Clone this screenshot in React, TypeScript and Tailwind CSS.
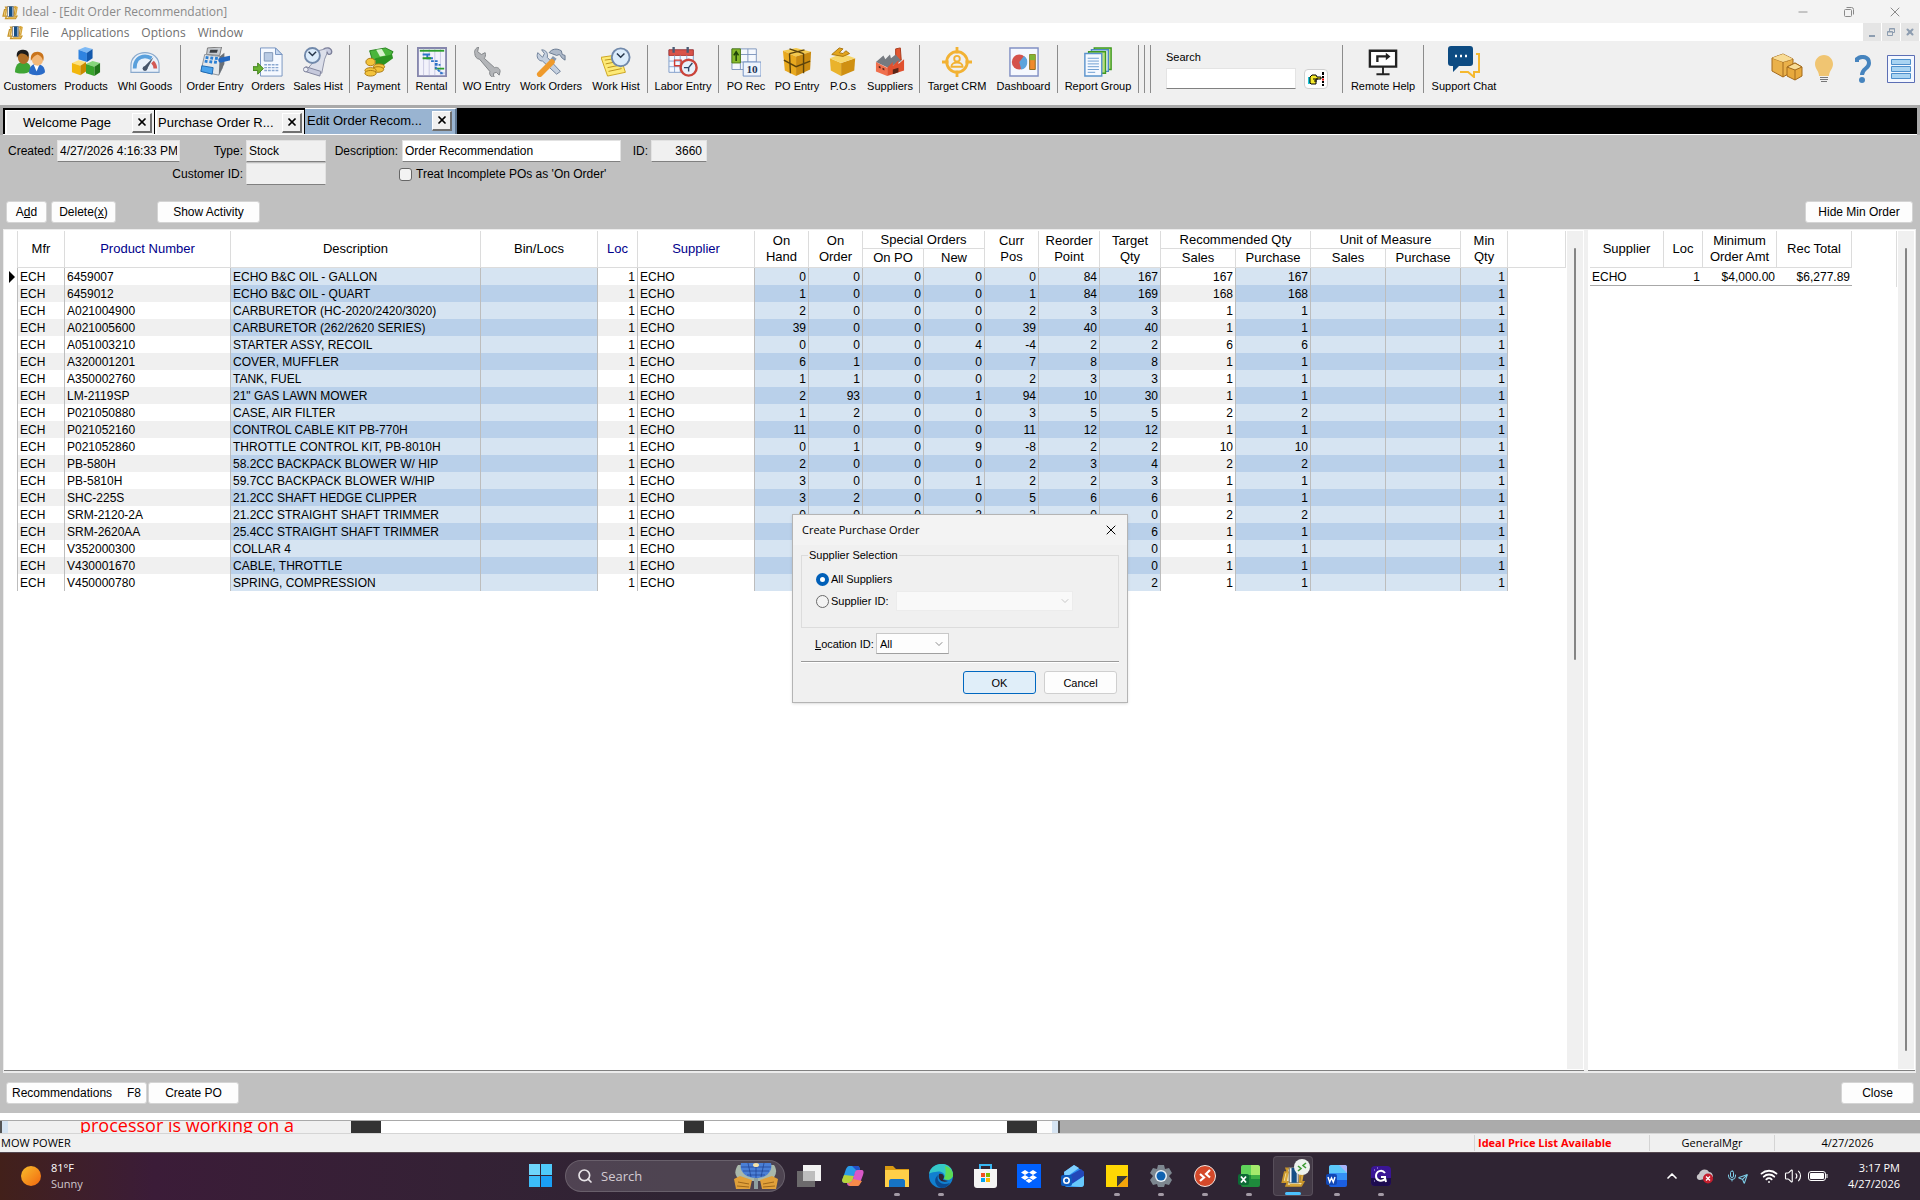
import type { ReactNode } from 'react';
import { ChevronDown, ChevronUp, Mic, Minus, Search, Send, Volume2, Wifi, X } from 'lucide-react';

// ---------------------------------------------------------------------------
// Data
// ---------------------------------------------------------------------------

interface OrderLine {
  product: string;
  description: string;
  onHand: number;
  onOrder: number;
  onPo: number;
  newQty: number;
  currPos: number;
  reorder: number;
  target: number;
  recSales: number;
  recPurchase: number;
}

function line(
  product: string, description: string, onHand: number, onOrder: number, onPo: number, newQty: number,
  currPos: number, reorder: number, target: number, recSales: number, recPurchase: number,
): OrderLine {
  return { product, description, onHand, onOrder, onPo, newQty, currPos, reorder, target, recSales, recPurchase };
}

const LINES: OrderLine[] = [
  line('6459007', 'ECHO B&C OIL - GALLON', 0, 0, 0, 0, 0, 84, 167, 167, 167),
  line('6459012', 'ECHO B&C OIL - QUART', 1, 0, 0, 0, 1, 84, 169, 168, 168),
  line('A021004900', 'CARBURETOR (HC-2020/2420/3020)', 2, 0, 0, 0, 2, 3, 3, 1, 1),
  line('A021005600', 'CARBURETOR (262/2620 SERIES)', 39, 0, 0, 0, 39, 40, 40, 1, 1),
  line('A051003210', 'STARTER ASSY, RECOIL', 0, 0, 0, 4, -4, 2, 2, 6, 6),
  line('A320001201', 'COVER, MUFFLER', 6, 1, 0, 0, 7, 8, 8, 1, 1),
  line('A350002760', 'TANK, FUEL', 1, 1, 0, 0, 2, 3, 3, 1, 1),
  line('LM-2119SP', '21" GAS LAWN MOWER', 2, 93, 0, 1, 94, 10, 30, 1, 1),
  line('P021050880', 'CASE, AIR FILTER', 1, 2, 0, 0, 3, 5, 5, 2, 2),
  line('P021052160', 'CONTROL CABLE KIT PB-770H', 11, 0, 0, 0, 11, 12, 12, 1, 1),
  line('P021052860', 'THROTTLE CONTROL KIT, PB-8010H', 0, 1, 0, 9, -8, 2, 2, 10, 10),
  line('PB-580H', '58.2CC BACKPACK BLOWER W/ HIP', 2, 0, 0, 0, 2, 3, 4, 2, 2),
  line('PB-5810H', '59.7CC BACKPACK BLOWER W/HIP', 3, 0, 0, 1, 2, 2, 3, 1, 1),
  line('SHC-225S', '21.2CC SHAFT HEDGE CLIPPER', 3, 2, 0, 0, 5, 6, 6, 1, 1),
  line('SRM-2120-2A', '21.2CC STRAIGHT SHAFT TRIMMER', 0, 0, 0, 2, 2, 0, 0, 2, 2),
  line('SRM-2620AA', '25.4CC STRAIGHT SHAFT TRIMMER', 5, 0, 0, 0, 5, 6, 6, 1, 1),
  line('V352000300', 'COLLAR 4', 0, 0, 0, 1, -1, 0, 0, 1, 1),
  line('V430001670', 'CABLE, THROTTLE', 0, 0, 0, 1, -1, 0, 0, 1, 1),
  line('V450000780', 'SPRING, COMPRESSION', 1, 0, 0, 0, 1, 2, 2, 1, 1),
];

const COLS = [
  'w-[13px]', 'w-[47px]', 'w-[166px]', 'w-[250px]', 'w-[117px]', 'w-[40px]', 'w-[117px]',
  'w-[54px]', 'w-[54px]', 'w-[61px]', 'w-[61px]', 'w-[54px]', 'w-[61px]', 'w-[61px]',
  'w-[75px]', 'w-[75px]', 'w-[75px]', 'w-[75px]', 'w-[47px]', '',
];

// ---------------------------------------------------------------------------
// Toolbar icons
// ---------------------------------------------------------------------------

function Svg({ children, className = 'size-[30px]' }: { children: ReactNode; className?: string }) {
  return <svg viewBox="0 0 32 32" className={className} fill="none" aria-hidden="true">{children}</svg>;
}

function IdealLogo({ className = 'size-4' }: { className?: string }) {
  return (
    <Svg className={className}>
      <path d="M7 6h20l-3 18h6l-3 5H7l2-5H2l3-13h4z" fill="#f2e2b0" stroke="#c8952a" strokeWidth="2.5" />
      <path d="M9 10 6 24M25 5l5 2-3 16M12 28h14" stroke="#d9a83c" strokeWidth="3" />
      <path d="M11 5h12v20H11z" fill="#f4f4f4" stroke="#777" strokeWidth="1.5" />
      <path d="M14 5h7v20h-7z" fill="#164f86" />
    </Svg>
  );
}

function CustomersIcon() {
  return (
    <Svg>
      <path d="M0 27c0-8 4-11 9-11s8 3 8 9c-4 4-13 4-17 2z" fill="#3fa535" />
      <ellipse cx="9" cy="11" rx="6" ry="7" fill="#b06f28" />
      <path d="M2 11C1 4 5 3 9 3s7 3 5 8c-2-4-6-4-8-4-2 1-3 3-4 4z" fill="#1c1c1c" />
      <path d="M15 28c0-7 3-10 8-10s9 3 9 9c-3 4-13 4-17 1z" fill="#2a6bc8" />
      <path d="m20 19 3 7 3-7z" fill="#fff" />
      <ellipse cx="24" cy="13" rx="6" ry="7" fill="#f3b878" />
      <path d="M17 15c-1-7 2-10 7-10s8 4 6 10c-1-4-3-6-6-7-3 1-5 3-7 7z" fill="#c9741c" />
    </Svg>
  );
}

function Cube({ x, y, top, left, right }: { x: number; y: number; top: string; left: string; right: string }) {
  return (
    <g transform={`translate(${x} ${y})`}>
      <path d="m0 3 7-3 8 2-6 4z" fill={top} />
      <path d="m0 3 9 3v10l-9-3z" fill={left} />
      <path d="m9 6 6-4v10l-6 4z" fill={right} />
    </g>
  );
}

function ProductsIcon() {
  return (
    <Svg>
      <Cube x={8} y={0} top="#7db9f5" left="#2f83e0" right="#1459ad" />
      <Cube x={1} y={14} top="#ffe27a" left="#f2b70c" right="#c98a00" />
      <Cube x={16} y={15} top="#86d67a" left="#38a32c" right="#1f7518" />
    </Svg>
  );
}

function GaugeIcon() {
  return (
    <Svg>
      <path d="M1 27V20C1 11 8 6 16 6s15 5 15 14v7z" fill="#e9f1fa" stroke="#8aa9cc" strokeWidth="1.2" />
      <path d="M5 23c0-9 5-13 11-13 3 0 5 1 7 2" stroke="#5aa0dc" strokeWidth="4" />
      <path d="M24 16c2 2 3 4 3 7" stroke="#d35a55" strokeWidth="4" />
      <path d="M14 22 25 11l-7 13z" fill="#46566b" />
      <circle cx="16" cy="23" r="2.600" fill="#46566b" />
    </Svg>
  );
}

function RegisterIcon() {
  return (
    <Svg>
      <path d="m8 1 15-1-2 9L7 8z" fill="#c8ccd1" stroke="#777" />
      <path d="M11 3h8l-1 3h-8z" fill="#3b3f44" />
      <path d="m5 8 16 2 3 12-4 8L1 26z" fill="#e4e7ea" stroke="#8a9097" />
      <path d="m21 10 5-4v12l-6 12z" fill="#6a7077" />
      <path d="m6 11 3 .5M11 11.500l3 .5M16 12l3 .5M5 15l3 .5M10 15.500l3 .5M15 16l3 .5" stroke="#2a7fd4" strokeWidth="3" />
      <path d="m2 20 12 2-1 7-12-3z" fill="#4aa3ec" stroke="#1c67b1" />
      <path d="m22 14 9-2" stroke="#2468c0" strokeWidth="5" strokeLinecap="round" />
    </Svg>
  );
}

function OrdersIcon() {
  return (
    <Svg>
      <path d="M8 1h16l7 7v23H8z" fill="#f5f9ff" stroke="#7593c0" />
      <path d="M24 1v7h7z" fill="#c6d8f0" stroke="#7593c0" />
      <path d="M12 6h9v9h-9z" fill="#b9cbe4" stroke="#7f95b5" />
      <path d="M12 19h16M12 22h16M12 25h16" stroke="#8aa8d0" strokeWidth="1.500" strokeDasharray="3 1" />
      <path d="M0 21h5v-4l6 6-6 6v-4H0z" fill="#69b332" stroke="#3d7d15" />
    </Svg>
  );
}

function Clock({ cx, cy, r, rim = '#7189ab' }: { cx: number; cy: number; r: number; rim?: string }) {
  return (
    <g>
      <circle cx={cx} cy={cy} r={r} fill="#dcecfb" stroke={rim} strokeWidth="2" />
      <path d={`M${cx - 4} ${cy - 4} ${cx} ${cy}l4-4`} stroke="#26364b" strokeWidth="1.600" />
    </g>
  );
}

function SalesHistIcon() {
  return (
    <Svg>
      <path d="M12 5 28 1l-5 12-3 15-15-5 7-8z" fill="#dcdfea" stroke="#8b8fa5" />
      <path d="M22 2c6-3 10 1 8 5-2 2-5 0-4-2" fill="#c9cde0" stroke="#7d819b" strokeWidth="1.500" />
      <path d="m3 21 16 5-1 5L2 26z" fill="#c6c9dc" stroke="#7d819b" />
      <circle cx="3" cy="24" r="2.500" fill="#eceef5" stroke="#7d819b" />
      <Clock cx={10} cy={9} r={8} />
    </Svg>
  );
}

function PaymentIcon() {
  return (
    <Svg>
      <path d="m6 4 17-3 8 4-3 5-19 4z" fill="#49b53c" stroke="#23821a" />
      <path d="m12 12 18-4 1 4-11 8-8-2z" fill="#2c9422" />
      <path d="m13 3 6-1 4 7-6 1z" fill="#d9f2cf" />
      <g fill="#f3c33c" stroke="#a9770f">
        <ellipse cx="7" cy="16" rx="5" ry="4" />
        <ellipse cx="16" cy="21" rx="6" ry="3" />
        <ellipse cx="15" cy="24" rx="6" ry="3" />
        <ellipse cx="7" cy="25" rx="6" ry="3" />
        <ellipse cx="7" cy="28" rx="6" ry="3" />
      </g>
    </Svg>
  );
}

function RentalIcon() {
  return (
    <Svg>
      <path d="M1 1h30v30H1z" fill="#f2f2fb" stroke="#8687ad" strokeWidth="2" />
      <path d="M7 2v28M13 2v28M19 2v28M25 2v28" stroke="#c9c9e2" />
      <path d="M3 4h26" stroke="#2b9e2b" strokeWidth="2" />
      <path d="M6 8h8M11 8v4h6" stroke="#2d72c8" strokeWidth="2" />
      <path d="M6 12h9M19 23h10" stroke="#2b9e2b" strokeWidth="2" />
      <path d="M15 15h6v4h4M20 17v5l6 6h3" stroke="#2d72c8" strokeWidth="2" strokeDasharray="3 1" />
    </Svg>
  );
}

function WrenchIcon() {
  return (
    <Svg>
      <path d="M3 7c-1-3 1-6 4-7l-1 5 4 3 4-2c1 3 0 5-1 6l11 10c3-1 6 1 6 4l-1 4-3-3-3 1v3l2 2c-4 0-7-3-6-7L8 13C5 13 3 10 3 7z" fill="#b3b5b8" stroke="#7f8285" />
    </Svg>
  );
}

function ToolsIcon() {
  return (
    <Svg>
      <path d="M2 6c-2 4 0 9 5 9l15 14 4-3L12 11c1-4-1-8-6-8l3 4-2 4z" fill="#c5d0df" stroke="#6d7f99" />
      <path d="M14 6c3-4 8-5 13-2l1 4 3 1v5l-3-2-3-4-3 1z" fill="#aeb9c9" stroke="#66778f" />
      <path d="m20 11-3 4" stroke="#8898ad" strokeWidth="5" />
      <path d="M17 16 4 29" stroke="#ef9a2c" strokeWidth="6" strokeLinecap="round" />
    </Svg>
  );
}

function WorkHistIcon() {
  return (
    <Svg>
      <path d="m0 11 20-3 6 19-19 4z" fill="#fdea77" stroke="#cba21c" />
      <path d="m4 14 14-2M5 18l15-3M7 22l15-3M8 26l14-3" stroke="#b98f17" />
      <Clock cx={21} cy={11} r={9.500} />
    </Svg>
  );
}

function LaborIcon() {
  return (
    <Svg>
      <path d="M1 3h26v24H1z" fill="#f4f8ff" stroke="#7e9cc9" />
      <path d="M1 3h26v6H1z" fill="#d9534a" stroke="#b03a32" />
      <path d="M6 0v6M21 0v6" stroke="#4a5a74" strokeWidth="2.500" />
      <path d="M1 15h26M1 21h26M7 9v18M13 9v18M20 9v18" stroke="#8ba8d2" />
      <path d="M7 14h7v6H7z" stroke="#d23c32" strokeWidth="1.500" />
      <circle cx="22" cy="22" r="8.500" fill="#e7f1fb" stroke="#ca433a" strokeWidth="2.600" />
      <path d="M26 17l-4 5h-5M22 22v4" stroke="#2e4668" strokeWidth="1.500" />
    </Svg>
  );
}

function PoRecIcon() {
  return (
    <Svg>
      <path d="M1 2h26v22H1z" fill="#f5f8fd" stroke="#7e95bd" />
      <path d="M1 8h26M1 16h26M10 2v22M18 2v22" stroke="#7e95bd" />
      <path d="M1 2h9v15H1z" fill="#86b92c" stroke="#4e7c12" />
      <path d="M5.500 15V6M3 9l2.500-4L8 9" stroke="#1f4207" strokeWidth="1.600" />
      <path d="M13 16h19v15H13z" fill="#eef4fc" stroke="#6e8ec2" />
      <text x="22.500" y="28" textAnchor="middle" fontSize="12" fontWeight="700" fontFamily="Liberation Serif, serif" fill="#1f3558">10</text>
    </Svg>
  );
}

function PackageIcon() {
  return (
    <Svg>
      <path d="m1 4 14-3 16 4-16 5z" fill="#f3c94e" />
      <path d="m1 4 14 6v21L3 25z" fill="#e8a91f" />
      <path d="m15 10 16-5-1 19-15 7z" fill="#c98a10" />
      <path d="M2 14l13 7 15-6M8 7l1 21M23 7v21M8 2l15 5M24 3 8 7" stroke="#5b430c" strokeWidth="1.500" />
    </Svg>
  );
}

function OpenBoxIcon() {
  return (
    <Svg>
      <path d="m2 12 12 5v14L3 25z" fill="#eab32c" />
      <path d="m14 17 15-5-1 13-14 6z" fill="#cf9012" />
      <path d="m2 12 13-5 14 5-15 5z" fill="#f7d76a" />
      <path d="M4 8 12 1l4 1-4 4 4 1 3-3 4 3-7 3z" fill="#e3a51d" stroke="#a8720b" />
    </Svg>
  );
}

function FactoryIcon() {
  return (
    <Svg>
      <path d="m22 2 5-1 1 13h-6z" fill="#e2552f" stroke="#a8391b" />
      <path d="m1 16 8-7 2 4 5-5 1 4 5-4 6 7-14 7z" fill="#767a80" />
      <path d="m1 16 12 6v9L1 26z" fill="#f06f4d" />
      <path d="m13 22 6-6v4l6-6v4l6-5v12l-18 6z" fill="#e0512f" />
      <path d="m4 20 2 1v2l-2-1zM8 22l2 1v2l-2-1zM19 24l6-2v5l-6 2z" fill="#5b2518" />
    </Svg>
  );
}

function TargetIcon() {
  return (
    <Svg>
      <circle cx="16" cy="16" r="11" stroke="#f2b233" strokeWidth="3" />
      <path d="M16 0v7M16 25v7M0 16h7M25 16h7" stroke="#f2b233" strokeWidth="3" />
      <circle cx="16" cy="12.500" r="3" stroke="#f2b233" strokeWidth="2" />
      <path d="M10 21c0-6 12-6 12 0z" stroke="#f2b233" strokeWidth="2" />
    </Svg>
  );
}

function DashboardIcon() {
  return (
    <Svg>
      <path d="M1 1h30v30H1z" fill="#f5f8fe" stroke="#8190c4" strokeWidth="1.500" />
      <circle cx="11" cy="16" r="8" fill="#d5524b" />
      <path d="M11 16 16 9.500A8 8 0 0 1 13 24z" fill="#5ba3dc" />
      <path d="M22 8h6v16h-6z" fill="#ef8a2e" stroke="#8d6a1c" />
      <path d="M22 8h6v6h-6z" fill="#7fb536" />
    </Svg>
  );
}

function ReportIcon() {
  return (
    <Svg>
      <g strokeWidth="1.500">
        <path d="M12 1h18v23H12z" fill="#b8dd7e" stroke="#3f9a20" />
        <path d="M9 3h18v23H9z" fill="#eaf4fc" stroke="#4c87c4" />
        <path d="M6 5h18v23H6z" fill="#b8dd7e" stroke="#3f9a20" />
        <path d="M2 7h18v24H2z" fill="#f5f9ff" stroke="#5a92cc" />
      </g>
      <path d="M5 12h12M5 15h12M5 18h12M5 21h12M5 24h12M5 27h8" stroke="#6a9bd0" />
    </Svg>
  );
}

function RemoteIcon() {
  return (
    <Svg>
      <path d="M2 4h28v17H2z" fill="#fff" stroke="#222" strokeWidth="2.500" />
      <path d="M10 16v-6h10" stroke="#222" strokeWidth="2.500" />
      <path d="m19 6 5 4-5 4z" fill="#222" />
      <path d="M16 21v7M9 29h14" stroke="#222" strokeWidth="2" />
    </Svg>
  );
}

function ChatIcon() {
  return (
    <Svg className="h-8 w-[34px]">
      <path d="M28 8h3v18h-5v5l-6-5h-8" stroke="#f5b82e" strokeWidth="2" />
      <path d="M3 0h19a3 3 0 0 1 3 3v14a3 3 0 0 1-3 3H11l-6 6v-6H3a3 3 0 0 1-3-3V3a3 3 0 0 1 3-3z" fill="#0d4b82" />
      <path d="M7 10h2M12 10h2M17 10h2" stroke="#fff" strokeWidth="2.500" />
    </Svg>
  );
}

type ToolItem = { label: string; width: string; icon: ReactNode };
const SEP = null;

const TOOLS: (ToolItem | null)[] = [
  { label: 'Customers', width: 'w-[60px]', icon: <CustomersIcon /> },
  { label: 'Products', width: 'w-[52px]', icon: <ProductsIcon /> },
  { label: 'Whl Goods', width: 'w-[66px]', icon: <GaugeIcon /> },
  SEP,
  { label: 'Order Entry', width: 'w-[64px]', icon: <RegisterIcon /> },
  { label: 'Orders', width: 'w-[42px]', icon: <OrdersIcon /> },
  { label: 'Sales Hist', width: 'w-[58px]', icon: <SalesHistIcon /> },
  SEP,
  { label: 'Payment', width: 'w-[53px]', icon: <PaymentIcon /> },
  SEP,
  { label: 'Rental', width: 'w-[43px]', icon: <RentalIcon /> },
  SEP,
  { label: 'WO Entry', width: 'w-[57px]', icon: <WrenchIcon /> },
  { label: 'Work Orders', width: 'w-[72px]', icon: <ToolsIcon /> },
  { label: 'Work Hist', width: 'w-[58px]', icon: <WorkHistIcon /> },
  SEP,
  { label: 'Labor Entry', width: 'w-[66px]', icon: <LaborIcon /> },
  SEP,
  { label: 'PO Rec', width: 'w-[50px]', icon: <PoRecIcon /> },
  { label: 'PO Entry', width: 'w-[52px]', icon: <PackageIcon /> },
  { label: 'P.O.s', width: 'w-[40px]', icon: <OpenBoxIcon /> },
  { label: 'Suppliers', width: 'w-[54px]', icon: <FactoryIcon /> },
  SEP,
  { label: 'Target CRM', width: 'w-[70px]', icon: <TargetIcon /> },
  { label: 'Dashboard', width: 'w-[63px]', icon: <DashboardIcon /> },
  SEP,
  { label: 'Report Group', width: 'w-[76px]', icon: <ReportIcon /> },
];

function ToolSep() {
  return <span className="mx-0.5 h-12 w-px shrink-0 bg-[#8c8c8c]" />;
}

function ToolButton({ label, width, icon }: ToolItem) {
  return (
    <button className={`flex shrink-0 flex-col items-center gap-px whitespace-nowrap pt-0.5 ${width}`}>
      <span className="flex h-[30px] items-center justify-center">{icon}</span>
      <span className="leading-4">{label}</span>
    </button>
  );
}

function Toolbar() {
  return (
    <div className="flex h-16 items-start bg-[#f0f0f0] pt-1 text-[11px] text-black">
      {TOOLS.map((tool, i) => (tool ? <ToolButton key={tool.label} {...tool} /> : <ToolSep key={i} />))}
      <span className="flex gap-px">
        <ToolSep />
        <ToolSep />
        <ToolSep />
      </span>
      <div className="ml-[13px] flex w-[174px] flex-col">
        <label htmlFor="quick-search" className="pt-1 leading-4">Search</label>
        <div className="flex items-center gap-2 pt-[3px]">
          <input id="quick-search" className="h-[21px] w-[130px] border border-[#e4e4e4] border-b-[#808080] bg-white px-1 outline-none" />
          <button aria-label="Go" className="flex h-5 w-6 items-center justify-center rounded-sm border border-[#cfcfcf] bg-[#fdfdfd]">
            <svg viewBox="0 0 18 14" className="h-3.5 w-[18px]" fill="none" aria-hidden="true">
              <path d="M1 5h2v7H1z" fill="#19c8d8" />
              <path d="m3 5 2-2h4l1 2h4v2H9v5H4L3 11z" fill="#f5e92a" stroke="#000" />
              <path d="M6 7h5M7 9h3" stroke="#000" />
              <path d="M16 0v3M16 4v2M16 9v2M16 12v2" stroke="#000" strokeWidth="2" />
              <path d="M16 6.500v2" stroke="#e00" strokeWidth="2" />
            </svg>
          </button>
        </div>
      </div>
      <ToolSep />
      <ToolButton label="Remote Help" width="w-[76px]" icon={<RemoteIcon />} />
      <ToolSep />
      <ToolButton label="Support Chat" width="w-[76px]" icon={<ChatIcon />} />
      <div className="ml-auto flex items-center pr-[5px] pt-2">
        <button aria-label="Inventory">
          <Svg className="size-8">
            <path d="m1 5 11-4 10 5v12l-10 6-11-6z" fill="#eab14a" stroke="#a36a1c" />
            <path d="m1 5 11 4 10-3M12 9v15M6 3l11 5" stroke="#a36a1c" />
            <path d="m1 5 11-4 10 5-10 3z" fill="#f8dc96" />
            <path d="m16 14 8-4 7 4v9l-7 4-8-4z" fill="#e8a93c" stroke="#a36a1c" />
            <path d="m16 14 8-4 7 4-7 3z" fill="#f8dc96" stroke="#a36a1c" />
            <path d="M24 17v10" stroke="#a36a1c" />
          </Svg>
        </button>
        <button aria-label="Tips" className="ml-3">
          <svg viewBox="0 0 18 28" className="h-7 w-[18px]" fill="none" aria-hidden="true">
            <path d="M9 0C4 0 0 4 0 9c0 5 4 7 4 12h10c0-5 4-7 4-12 0-5-4-9-9-9z" fill="#f0c572" />
            <path d="M5 22.500h8M5 24.500h8M6 26.500h6" stroke="#777" />
          </svg>
        </button>
        <button aria-label="Help" className="ml-[22px]">
          <svg viewBox="0 0 16 28" className="h-7 w-4" fill="none" aria-hidden="true">
            <path d="M2 7V4c5-4 12-2 12 4 0 6-7 5-7 12" stroke="#4684be" strokeWidth="4" />
            <circle cx="7" cy="25" r="3" fill="#4684be" />
          </svg>
        </button>
        <button aria-label="List" className="ml-4">
          <svg viewBox="0 0 28 28" className="size-7" fill="none" aria-hidden="true">
            <path d="M.5.500h27v27H.500z" fill="#f4f8ff" stroke="#5c6fb5" />
            <path d="M4.500 4.500h19v5h-19zM4.500 11.500h19v5h-19zM4.500 18.500h19v5h-19z" fill="#a9d4f2" stroke="#4d8fcb" />
          </svg>
        </button>
      </div>
    </div>
  );
}

// ---------------------------------------------------------------------------
// Window chrome
// ---------------------------------------------------------------------------

function TitleBar() {
  return (
    <header className="font-['Open_Sans',sans-serif] text-xs text-[#8a8a8a]">
      <div className="flex h-[23px] items-center bg-[#f3f3f3] pl-0.5">
        <IdealLogo />
        <span className="ml-1">Ideal - [Edit Order Recommendation]</span>
        <div className="ml-auto flex items-center">
          <button aria-label="Minimize" className="flex w-[46px] justify-center"><Minus className="size-3.5" strokeWidth={1.5} /></button>
          <button aria-label="Restore" className="flex w-[46px] justify-center">
            <svg viewBox="0 0 10 10" className="size-2.5" fill="none" stroke="currentColor" aria-hidden="true">
              <rect x=".5" y="2.500" width="7" height="7" rx="1" />
              <path d="M2.500.500h5a2 2 0 0 1 2 2v5" />
            </svg>
          </button>
          <button aria-label="Close window" className="flex w-[46px] justify-center"><X className="size-4" strokeWidth={1.5} /></button>
          <span className="w-0.5" />
        </div>
      </div>
      <nav className="flex h-[18px] items-center bg-white pl-[7px] text-[#6f6f6f]">
        <IdealLogo />
        <button className="ml-[7px] pt-px">File</button>
        <button className="ml-3 pt-px">Applications</button>
        <button className="ml-3 pt-px">Options</button>
        <button className="ml-3 pt-px">Window</button>
        <div className="ml-auto flex gap-px pr-px text-[#8d9db0]">
          <button aria-label="Minimize document" className="flex size-[18px] items-end justify-center bg-[#e5e5e5] pb-1"><span className="h-0.5 w-1.5 bg-[#8d9db0]" /></button>
          <button aria-label="Restore document" className="flex size-[18px] items-center justify-center bg-[#e5e5e5]">
            <svg viewBox="0 0 8 8" className="size-2" fill="none" stroke="currentColor" aria-hidden="true">
              <path d="M.5 3.500h5v4h-5zM2.500 3V.500h5v4H6M.5 4h5M2.500 1h5" />
            </svg>
          </button>
          <button aria-label="Close document" className="flex size-[18px] items-center justify-center bg-[#e5e5e5]"><X className="size-2.5" strokeWidth={5} /></button>
        </div>
      </nav>
    </header>
  );
}

function DocTab({ title, active = false, center = false }: { title: string; active?: boolean; center?: boolean }) {
  return (
    <div
      className={`flex items-center text-[13px] ${
        active
          ? 'h-[26px] w-[152px] border-r-2 border-t border-r-[#5f7690] border-t-white bg-[#99b4d1] pb-0.5 pl-0.5 pr-[3px]'
          : 'mt-0.5 h-6 w-[149px] border-l-2 border-t border-white bg-[#f0f0f0] pl-px pr-0.5'
      }`}
    >
      <button className={`min-w-0 flex-1 truncate whitespace-nowrap pt-px ${center ? 'pr-1.5 text-center' : 'text-left'}`}>{title}</button>
      <button aria-label={`Close ${title}`} className="flex size-5 shrink-0 items-center justify-center border border-b-2 border-r-2 border-white border-b-[#707070] border-r-[#707070] bg-[#f0f0f0]">
        <X className="size-3" strokeWidth={3.5} />
      </button>
    </div>
  );
}

function TabStrip() {
  return (
    <div className="border-t-[3px] border-[#a9a9a9] bg-[#a9a9a9] px-[3px]">
      <div className="flex h-[27px] gap-px border-b border-white bg-black pl-0.5">
        <DocTab title="Welcome Page" center />
        <DocTab title="Purchase Order R..." />
        <DocTab title="Edit Order Recom..." active />
      </div>
    </div>
  );
}

// ---------------------------------------------------------------------------
// Order header form
// ---------------------------------------------------------------------------

const fieldCls = 'h-[22px] border border-[#e2e2e2] border-b-[#808080] px-0.5 text-xs outline-none';
const btnCls = 'h-[22px] rounded-[3px] border border-[#d4d4d4] bg-[#fdfdfd] text-xs whitespace-nowrap';

function OrderForm() {
  return (
    <form className="px-[3px] pt-[5px] text-xs" onSubmit={(e) => e.preventDefault()}>
      <div className="flex items-center">
        <label htmlFor="created" className="w-[51px] text-right">Created:</label>
        <input id="created" readOnly defaultValue="4/27/2026 4:16:33 PM" className={`${fieldCls} ml-[3px] w-[123px] bg-[#f0f0f0]`} />
        <label htmlFor="type" className="w-[63px] text-right">Type:</label>
        <input id="type" readOnly defaultValue="Stock" className={`${fieldCls} ml-[3px] w-20 bg-[#f0f0f0]`} />
        <label htmlFor="desc" className="w-[72px] text-right">Description:</label>
        <input id="desc" defaultValue="Order Recommendation" className={`${fieldCls} ml-1 w-[219px] bg-white`} />
        <label htmlFor="order-id" className="w-[27px] text-right">ID:</label>
        <input id="order-id" readOnly defaultValue="3660" className={`${fieldCls} ml-[3px] w-14 bg-[#f0f0f0] pr-1 text-right`} />
      </div>
      <div className="flex items-center pt-px">
        <label htmlFor="customer" className="w-[240px] text-right">Customer ID:</label>
        <input id="customer" readOnly className={`${fieldCls} ml-[3px] w-20 bg-[#f0f0f0]`} />
        <input id="incomplete" type="checkbox" className="ml-[73px] size-[13px] appearance-none rounded-[3px] border border-[#666] bg-[#f3f3f3]" />
        <label htmlFor="incomplete" className="ml-1">Treat Incomplete POs as 'On Order'</label>
      </div>
      <div className="flex items-center pb-1.5 pt-4">
        <button type="button" className={`${btnCls} ml-[3px] w-[41px]`}>A<u>d</u>d</button>
        <button type="button" className={`${btnCls} ml-1 w-[65px]`}>Delete(<u>x</u>)</button>
        <button type="button" className={`${btnCls} ml-[41px] w-[103px]`}>Show Activity</button>
        <button type="button" className={`${btnCls} ml-auto mr-1 w-[108px]`}>Hide Min Order</button>
      </div>
    </form>
  );
}

// ---------------------------------------------------------------------------
// Grids
// ---------------------------------------------------------------------------

const thCls = 'border-r border-b border-[#dcdcdc] p-0 text-center font-normal leading-4';
const thBlue = `${thCls} text-[#00008b]`;
const rule = 'border-r border-[#bdbdbd] pt-px';

function OrderRow({ row, index }: { row: OrderLine; index: number }) {
  const odd = index % 2 === 1;
  const plain = odd ? 'bg-[#f0f0f0]' : 'bg-white';
  const tint = odd ? 'bg-[#b9d0ea]' : 'bg-[#d6e4f2]';
  const num = `${rule} pr-0.5 text-right`;
  return (
    <tr className="h-[17px] leading-4">
      <td className="border-r border-[#bdbdbd] p-0">
        {index === 0 && (
          <svg viewBox="0 0 6 12" className="ml-1 h-3 w-1.5" aria-label="Current row"><path d="M0 0 6 6 0 12z" fill="#000" /></svg>
        )}
      </td>
      <td className={`${rule} ${plain} pl-0.5`}>ECH</td>
      <td className={`${rule} ${plain} pl-0.5`}>{row.product}</td>
      <td className={`${rule} ${tint} pl-0.5`}>{row.description}</td>
      <td className={`${rule} ${tint}`} />
      <td className={`${num} ${plain}`}>1</td>
      <td className={`${rule} ${plain} pl-0.5`}>ECHO</td>
      <td className={`${num} ${tint}`}>{row.onHand}</td>
      <td className={`${num} ${tint}`}>{row.onOrder}</td>
      <td className={`${num} ${tint}`}>{row.onPo}</td>
      <td className={`${num} ${tint}`}>{row.newQty}</td>
      <td className={`${num} ${tint}`}>{row.currPos}</td>
      <td className={`${num} ${tint}`}>{row.reorder}</td>
      <td className={`${num} ${tint}`}>{row.target}</td>
      <td className={`${num} ${plain}`}>{row.recSales}</td>
      <td className={`${num} ${tint}`}>{row.recPurchase}</td>
      <td className={`${rule} ${tint}`} />
      <td className={`${rule} ${tint}`} />
      <td className={`${num} ${tint}`}>1</td>
      <td />
    </tr>
  );
}

function OrderGrid() {
  return (
    <div className="flex min-w-0 flex-1 border-b border-[#808080] bg-white pl-px pt-px">
      <div className="min-w-0 flex-1 overflow-hidden">
        <table className="w-full table-fixed border-separate border-spacing-0 whitespace-nowrap text-xs">
          <colgroup>
            {COLS.map((w, i) => <col key={i} className={w} />)}
          </colgroup>
          <thead className="text-[13px]">
            <tr className="h-[18px]">
              <th rowSpan={2} className="border-r border-[#dcdcdc] p-0" />
              <th rowSpan={2} className={thCls}>Mfr</th>
              <th rowSpan={2} className={thBlue}>Product Number</th>
              <th rowSpan={2} className={thCls}>Description</th>
              <th rowSpan={2} className={thCls}>Bin/Locs</th>
              <th rowSpan={2} className={thBlue}>Loc</th>
              <th rowSpan={2} className={thBlue}>Supplier</th>
              <th rowSpan={2} className={thCls}>On<br />Hand</th>
              <th rowSpan={2} className={thCls}>On<br />Order</th>
              <th colSpan={2} className={thCls}>Special Orders</th>
              <th rowSpan={2} className={thCls}>Curr<br />Pos</th>
              <th rowSpan={2} className={thCls}>Reorder<br />Point</th>
              <th rowSpan={2} className={thCls}>Target<br />Qty</th>
              <th colSpan={2} className={thCls}>Recommended Qty</th>
              <th colSpan={2} className={thCls}>Unit of Measure</th>
              <th rowSpan={2} className={thCls}>Min<br />Qty</th>
              <th rowSpan={2} className={thCls} />
            </tr>
            <tr className="h-[19px]">
              <th className={thCls}>On PO</th>
              <th className={thCls}>New</th>
              <th className={thCls}>Sales</th>
              <th className={thCls}>Purchase</th>
              <th className={thCls}>Sales</th>
              <th className={thCls}>Purchase</th>
            </tr>
          </thead>
          <tbody>
            {LINES.map((row, i) => <OrderRow key={row.product} row={row} index={i} />)}
          </tbody>
        </table>
      </div>
      <div className="mb-px ml-px mr-px flex w-4 justify-center bg-[#f0f0f0] pt-[17px]">
        <span className="h-[412px] w-0.5 rounded bg-[#858585]" />
      </div>
    </div>
  );
}

function SupplierGrid() {
  return (
    <div className="flex w-[327px] border-b border-[#808080] bg-white pl-0.5 pt-px">
      <div className="flex flex-1 items-start">
        <table className="w-[262px] table-fixed border-separate border-spacing-0 whitespace-nowrap text-xs">
          <colgroup>
            <col className="w-[74px]" />
            <col className="w-[39px]" />
            <col className="w-[74px]" />
            <col className="w-[75px]" />
          </colgroup>
          <thead className="text-[13px]">
            <tr className="h-[37px]">
              <th className={thCls}>Supplier</th>
              <th className={thCls}>Loc</th>
              <th className={thCls}>Minimum<br />Order Amt</th>
              <th className={thCls}>Rec Total</th>
            </tr>
          </thead>
          <tbody>
            <tr className="h-[18px] leading-4">
              <td className="border-b border-[#a8a8a8] pl-0.5 pt-px">ECHO</td>
              <td className="border-b border-[#a8a8a8] pr-[3px] pt-px text-right">1</td>
              <td className="border-b border-[#a8a8a8] pr-0.5 pt-px text-right">$4,000.00</td>
              <td className="border-b border-[#a8a8a8] pr-0.5 pt-px text-right">$6,277.89</td>
            </tr>
          </tbody>
        </table>
        <span className="ml-auto h-14 w-px bg-[#dcdcdc]" />
      </div>
      <div className="mb-px ml-px mr-px flex w-4 justify-center bg-[#f0f0f0] pb-[18px] pt-[17px]">
        <span className="w-0.5 rounded bg-[#858585]" />
      </div>
    </div>
  );
}

// ---------------------------------------------------------------------------
// Create Purchase Order dialog
// ---------------------------------------------------------------------------

function Radio({ id, label, checked }: { id: string; label: string; checked?: boolean }) {
  return (
    <span className="flex items-center gap-0.5">
      <input
        id={id}
        type="radio"
        name="supplier-mode"
        defaultChecked={checked}
        className="size-[13px] appearance-none rounded-full border border-[#6a6a6a] bg-[#f3f3f3] checked:border-4 checked:border-[#005fb8] checked:bg-white"
      />
      <label htmlFor={id}>{label}</label>
    </span>
  );
}

function CreatePoDialog() {
  return (
    <div role="dialog" aria-label="Create Purchase Order" className="absolute inset-x-0 top-[514px] mx-auto h-[189px] w-[336px] border border-[#b4b4b4] bg-[#f0f0f0] text-[11px] leading-4 text-black shadow-sm">
      <div className="flex h-[30px] items-center justify-between bg-[#f3f3f3] pl-[9px] pr-2">
        <h2 className="font-['Open_Sans',sans-serif] text-[11px]">Create Purchase Order</h2>
        <button aria-label="Close dialog"><X className="size-4" strokeWidth={1.5} /></button>
      </div>
      <div className="px-2 pt-0.5">
        <fieldset className="h-[81px] border border-[#dcdcdc] pl-3.5">
          <legend className="-ml-2 px-px">Supplier Selection</legend>
          <div className="pt-2"><Radio id="all-suppliers" label="All Suppliers" checked /></div>
          <div className="flex items-center gap-2 pt-1">
            <Radio id="one-supplier" label="Supplier ID:" />
            <span className="flex flex-1 items-center">
              <select aria-label="Supplier" disabled className="h-5 w-[177px] appearance-none border border-[#ececec] bg-[#f9f9f9]" />
              <ChevronDown className="-ml-3.5 size-3 text-[#b5b5b5]" strokeWidth={1.5} />
            </span>
          </div>
        </fieldset>
        <div className="flex items-center pl-3.5 pt-[5px]">
          <label htmlFor="location" className="w-[61px]"><u>L</u>ocation ID:</label>
          <select id="location" className="h-[21px] w-[73px] appearance-none border border-[#c8c8c8] border-b-[#a0a0a0] bg-[#fdfdfd] pl-[3px]">
            <option>All</option>
          </select>
          <ChevronDown className="-ml-4 size-3 text-[#666]" strokeWidth={1.5} />
        </div>
        <div className="mt-[7px] border-b border-t border-b-white border-t-[#9a9a9a]" />
        <div className="flex justify-end gap-2 pr-0.5 pt-2">
          <button className="h-[23px] w-[73px] rounded-[3px] border border-[#0067c0] bg-[#e0eef9]">OK</button>
          <button className="h-[23px] w-[73px] rounded-[3px] border border-[#cfcfcf] bg-[#fdfdfd]">Cancel</button>
        </div>
      </div>
    </div>
  );
}

// ---------------------------------------------------------------------------
// Strip of the window behind, plus the status bar
// ---------------------------------------------------------------------------

function BackgroundStrip() {
  return (
    <div className="flex h-[14px] overflow-hidden border-b border-t border-b-[#d5d5d5] border-t-[#a9a9a9] bg-[#ababab]">
      <span className="w-0.5 bg-[#555]" />
      <span className="w-1.5 bg-[#d6e4f2]" />
      <div className="flex h-3 w-[343px] items-center bg-[#f0f0f0] pb-1 pl-[72px]">
        <p className="whitespace-nowrap font-['Open_Sans',sans-serif] text-[18px] leading-none text-[#ff0000]">processor is working on a</p>
      </div>
      <span className="w-[30px] bg-[#333]" />
      <span className="w-[303px] bg-white" />
      <span className="w-5 bg-[#333]" />
      <span className="w-[303px] bg-white" />
      <span className="w-[30px] bg-[#333]" />
      <span className="w-[15px] bg-[#fcfcfc]" />
      <span className="w-1.5 bg-[#d6e4f2]" />
      <span className="w-0.5 bg-[#555]" />
    </div>
  );
}

function StatusBar() {
  return (
    <footer className="flex h-[18px] items-center bg-[#f0f0f0] font-['Open_Sans',sans-serif] text-[11px] leading-4">
      <span className="flex-1 pl-px">MOW POWER</span>
      <a href="#price-list" className="w-[175px] border-l border-[#d4d4d4] pl-[3px] font-bold text-[#ff0000]">Ideal Price List Available</a>
      <span className="w-[125px] border-l border-[#d4d4d4] text-center">GeneralMgr</span>
      <span className="w-[146px] border-l border-[#d4d4d4] text-center">4/27/2026</span>
    </footer>
  );
}

// ---------------------------------------------------------------------------
// Taskbar
// ---------------------------------------------------------------------------

function T({ children }: { children: ReactNode }) {
  return <svg viewBox="0 0 24 24" className="size-6" fill="none" aria-hidden="true">{children}</svg>;
}

const TASKS: { name: string; running?: boolean; active?: boolean; icon: ReactNode }[] = [
  { name: 'Task View', icon: <T><path d="M6 1h18v16H6z" fill="#f2f2f2" /><path d="M0 7h18v16H0z" fill="#777" fillOpacity=".85" /><path d="M6 7h12v10H6z" fill="#bdbdbd" /></T> },
  {
    name: 'Copilot',
    icon: (
      <T>
        <path d="M8 2h8c2 0 3 2 3 4l-4 1-3 8c-1 3-2 4-5 4H4c-3 0-3-3-2-5L5 5c1-2 2-3 3-3z" fill="#2a9be8" />
        <path d="M3 11 1 16c0 2 1 3 3 3h3c3 0 4-1 5-4l1-3z" fill="#b7d43a" />
        <path d="M16 22H9c-2 0-3-1-3-3 4 0 5-2 6-4l2-7c1-2 2-2 4-2h2c3 0 3 2 2 5l-3 8c-1 2-2 3-3 3z" fill="#d858c8" />
        <path d="M7 19c4 0 4-2 5-4l9 2-2 3c-1 2-2 2-3 2H9z" fill="#f78a4a" />
        <path d="M11 2h5c2 0 3 2 3 4h-4z" fill="#2450c8" />
      </T>
    ),
  },
  { name: 'File Explorer', running: true, icon: <T><path d="M0 2h8l3 3h13v18H0z" fill="#d99a12" /><path d="M0 6h24v17H0z" fill="#ffcf48" /><path d="M4 17c0-1 1-2 2-2h12c1 0 2 1 2 2v6H4z" fill="#1673c5" /></T> },
  {
    name: 'Edge',
    running: true,
    icon: (
      <T>
        <circle cx="12" cy="12" r="12" fill="#1180d0" />
        <path d="M0 10C2-3 23-4 24 10c0 5-5 7-9 5 3-6-4-9-9-7-3 0-5 1-6 2z" fill="#35c8c8" />
        <path d="M16 2c5 1 8 5 8 9 0 4-5 6-9 4 2-4 2-9 1-13z" fill="#5ddc55" />
        <path d="M9 11c-2 6 3 11 12 8-2 3-5 5-9 5C6 22 4 15 9 11z" fill="#0b4a91" />
        <path d="M10 10c2-1 5 0 5 3l-1 3 5 1c-4 2-11 0-9-7z" fill="#2f2433" />
      </T>
    ),
  },
  {
    name: 'Store',
    icon: (
      <T>
        <path d="M7 6V1h11v5" stroke="#38b6f2" strokeWidth="2" />
        <path d="M1 5h23v16a3 3 0 0 1-3 3H4a3 3 0 0 1-3-3z" fill="#f4f4f4" />
        <path d="M8 9h4v4H8z" fill="#f25022" /><path d="M13 9h4v4h-4z" fill="#7fba00" />
        <path d="M8 14h4v4H8z" fill="#00a4ef" /><path d="M13 14h4v4h-4z" fill="#ffb900" />
      </T>
    ),
  },
  { name: 'Dropbox', icon: <T><path d="M0 0h24v24H0z" fill="#0061ff" /><path d="m8 6 4 2.500L8 11 4 8.500zM16 6l4 2.500-4 2.500-4-2.500zM8 11l4 2.500L8 16l-4-2.500zM16 11l4 2.500-4 2.500-4-2.500zM12 14.500l3.500 2.200L12 19l-3.500-2.300z" fill="#fff" /></T> },
  {
    name: 'Outlook',
    icon: (
      <T>
        <path d="M3 8 13 1l10 7v11c0 2-1 4-3 4H6c-2 0-3-2-3-4z" fill="#2b8df0" />
        <path d="m3 8 10-7 5 3L4 14z" fill="#7fd0ff" /><path d="m4 14 16-9 3 3v4L9 21z" fill="#2347b8" />
        <path d="m8 22 15-10v8c0 2-1 3-3 3z" fill="#67c8fb" />
        <rect y="11" width="11" height="11" rx="2" fill="#0f5bbd" />
        <circle cx="5.500" cy="16.500" r="2.700" stroke="#fff" strokeWidth="1.600" />
      </T>
    ),
  },
  { name: 'Sticky Notes', running: true, icon: <T><path d="M1 1h22v22H1z" fill="#ffd803" /><path d="M12 12h11L12 23z" fill="#3a3a3a" /><path d="M23 12v11H12z" fill="#f5a50a" /></T> },
  {
    name: 'Settings',
    running: true,
    icon: (
      <T>
        <path d="m9 1 6 0 1 4 4-1 3 5-3 3 3 4-3 5-4-1-1 3H9l-1-3-4 1-3-5 3-4-3-3 3-5 4 1z" fill="#7d8790" />
        <circle cx="12" cy="12" r="6" fill="#e9f1f7" /><circle cx="12" cy="12" r="4.500" fill="#0f62b0" />
      </T>
    ),
  },
  { name: 'Remote Desktop', running: true, icon: <T><circle cx="12" cy="12" r="10.500" fill="#d4492a" stroke="#f0e6e2" /><path d="m7 10 4 3.500L7 17M17 6l-4 4 4 3.500" stroke="#fff" strokeWidth="2.200" /></T> },
  {
    name: 'Excel',
    running: true,
    icon: (
      <T>
        <rect x="4" y="1" width="19" height="22" rx="2" fill="#1e8a3c" />
        <path d="M6 1h8v10H4V3c0-1 1-2 2-2z" fill="#5fd35a" /><path d="M14 1h7c1 0 2 1 2 2v8h-9z" fill="#a5ea6c" />
        <path d="M14 11h9v4h-9z" fill="#3daf45" />
        <rect x="1" y="10" width="11" height="11" rx="2" fill="#0c6b35" />
        <path d="m4 12.500 5 6M9 12.500l-5 6" stroke="#fff" strokeWidth="1.800" />
      </T>
    ),
  },
  { name: 'Ideal', running: true, active: true, icon: <IdealLogo className="size-6" /> },
  {
    name: 'Word',
    running: true,
    icon: (
      <T>
        <rect x="4" y="1" width="18" height="22" rx="2" fill="#1b5fe0" />
        <path d="M6 1h14c1 0 2 1 2 2v6H4V3c0-1 1-2 2-2z" fill="#5cc8fa" /><path d="M14 1h6c1 0 2 1 2 2v6z" fill="#a9b2f8" />
        <path d="M4 9h18v7H4z" fill="#3490f5" />
        <rect x="1" y="10" width="11" height="11" rx="2" fill="#1248b5" />
        <path d="m3 13 1.700 5L6.500 14l1.800 4L10 13" stroke="#fff" strokeWidth="1.400" />
      </T>
    ),
  },
  {
    name: 'G',
    running: true,
    icon: (
      <T>
        <rect x="2" y="2" width="20" height="20" rx="4" fill="#3a1595" />
        <path d="M2 14h20v4a4 4 0 0 1-4 4H6a4 4 0 0 1-4-4z" fill="#1d0c50" />
        <path d="M16 9c-3-4-9-2-9 3s6 6 9 3v-2h-4M16 14l1 4" stroke="#fff" strokeWidth="2" />
        <path d="M5 6h1M8 4h1M5 17h1" stroke="#c9b6ff" />
      </T>
    ),
  },
];

function TaskButton({ name, running, active, icon }: (typeof TASKS)[number]) {
  return (
    <button
      aria-label={name}
      className={`relative mx-0.5 flex h-10 w-10 shrink-0 items-center justify-center rounded ${active ? 'border border-white/10 bg-white/10' : ''}`}
    >
      {icon}
      {active && (
        <svg viewBox="0 0 16 16" className="absolute right-0.5 top-0.5 size-4" aria-hidden="true">
          <circle cx="8" cy="8" r="8" fill="#eef2ee" />
          <path d="m4 7 3 2.500L4 12M12 4 9 6.500l3 2.500" stroke="#3f9c35" strokeWidth="1.600" fill="none" />
        </svg>
      )}
      {running && <span className={`absolute bottom-0 h-[3px] rounded-full ${active ? 'w-4 bg-[#4cc2ff]' : 'w-1.5 bg-[#a39aa5]'}`} />}
    </button>
  );
}

function Taskbar() {
  return (
    <div className="flex h-12 items-center border-t border-[#54474f] bg-linear-to-r from-[#42201a] via-[#3b1c38] via-8% to-[#2f2433] to-35% pb-0.5 font-['Open_Sans',sans-serif] text-[11px] leading-4 text-white">
      <button className="flex w-[529px] items-center gap-2.5 pl-[21px] text-left">
        <span className="size-5 rounded-full bg-linear-to-br from-[#f6bd2b] to-[#f0640e]" />
        <span className="flex flex-col">
          <span>81°F</span>
          <span className="text-[#cfc7cd]">Sunny</span>
        </span>
      </button>
      <button aria-label="Start" className="grid w-[23px] grid-cols-2 gap-px">
        <span className="h-[11px] bg-[#6fd5fb]" />
        <span className="h-[11px] bg-[#4fc9fa]" />
        <span className="h-[11px] bg-[#3cbcf8]" />
        <span className="h-[11px] bg-[#1a9ff5]" />
      </button>
      <label className="ml-[13px] flex h-8 w-[220px] items-center rounded-full border border-white/15 bg-white/15 pl-[11px] pr-1">
        <Search className="size-4 text-[#e8e4e8]" strokeWidth={2.5} />
        <input aria-label="Search" placeholder="Search" className="ml-2 w-[120px] bg-transparent text-[13px] placeholder-[#d3cbd2] outline-none" />
        <svg viewBox="0 0 48 26" className="ml-auto h-[26px] w-12" aria-hidden="true">
          <path d="M6 2h36c4 6 2 12-4 16H10C2 14 2 8 6 2z" fill="#a9b8ab" />
          <path d="M9 0h30c2 8-4 15-15 15S7 8 9 0z" fill="#4a7fd6" />
          <path d="M9 4h30M11 8h26M15 12h18M16 0l3 14M24 0v15M32 0l-3 14" stroke="#1d3f8f" strokeWidth=".7" fill="none" />
          <ellipse cx="24" cy="2" rx="3" ry="2" fill="#f7e3a8" />
          <path d="M22 15h4v11h-4z" fill="#8fa0a0" />
          <path d="M2 16 8 13l12 4-2 9H4zM46 16l-6-3-12 4 2 9h14z" fill="#e0a03a" />
          <path d="m6 19 11 2M5 23l12 1M42 19l-11 2M43 23l-12 1" stroke="#8d5812" strokeWidth=".8" fill="none" />
        </svg>
      </label>
      <div className="ml-0.5 flex">
        {TASKS.map((t) => <TaskButton key={t.name} {...t} />)}
      </div>
      <div className="ml-auto flex items-center pr-5">
        <ChevronUp className="size-4" strokeWidth={2.5} />
        <svg viewBox="0 0 18 16" className="ml-4 h-4 w-[18px]" aria-hidden="true">
          <path d="M4 12C0 12 0 7 3 6c1-5 8-6 10-2 3 0 4 3 4 5z" fill="#c9c6ca" />
          <circle cx="12" cy="10.500" r="5" fill="#c41f2e" />
          <path d="m10 8.500 4 4M14 8.500l-4 4" stroke="#fff" strokeWidth="1.300" />
        </svg>
        <span className="ml-3 flex items-center text-[#7fd0ea]">
          <Mic className="size-3" strokeWidth={2} />
          <Send className="mt-1.5 size-2.5" strokeWidth={2.5} />
        </span>
        <Wifi className="ml-3 size-[18px]" strokeWidth={2.5} />
        <Volume2 className="ml-1.5 size-[18px]" strokeWidth={1.5} />
        <svg viewBox="0 0 20 10" className="ml-1.5 h-2.5 w-5" aria-hidden="true">
          <rect x=".5" y=".5" width="17" height="9" rx="2.500" fill="none" stroke="#fff" />
          <rect x="2" y="2" width="14" height="6" rx="1" fill="#fff" />
          <path d="M19 3v4" stroke="#fff" />
        </svg>
        <div className="ml-4 w-14 text-right">
          <div>3:17 PM</div>
          <div>4/27/2026</div>
        </div>
      </div>
    </div>
  );
}

// ---------------------------------------------------------------------------

export default function App() {
  return (
    <div className="relative flex min-h-screen flex-col bg-white font-['Liberation_Sans',Arial,sans-serif] text-black">
      <TitleBar />
      <Toolbar />
      <TabStrip />
      <main className="flex flex-1 flex-col bg-[#c0c0c0]">
        <OrderForm />
        <div className="ml-[3px] mr-1 flex flex-1 gap-1 border border-b-2 border-[#ececec] bg-[#f0f0f0]">
          <OrderGrid />
          <SupplierGrid />
        </div>
        <div className="flex px-1.5 pb-[9px] pt-[9px]">
          <button className={`${btnCls} flex w-[141px] items-center justify-between px-[5px]`}>
            <span>Recommendations</span>
            <span>F8</span>
          </button>
          <button className={`${btnCls} ml-px w-[91px]`}>Create PO</button>
          <button className={`${btnCls} ml-auto w-[73px]`}>Close</button>
        </div>
      </main>
      <div className="h-[7px] bg-white" />
      <BackgroundStrip />
      <StatusBar />
      <Taskbar />
      <CreatePoDialog />
    </div>
  );
}
